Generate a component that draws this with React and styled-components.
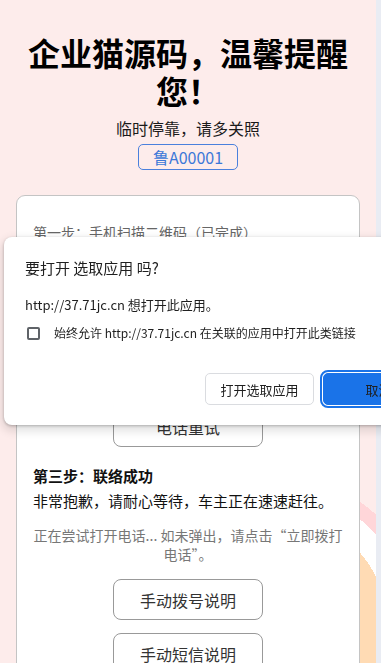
import React from "react";
import styled, { createGlobalStyle } from "styled-components";

const GlobalStyle = createGlobalStyle`
  html, body {
    margin: 0;
    padding: 0;
    overflow: hidden;
    font-family: "Noto Sans CJK SC", "Noto Sans", sans-serif;
  }
`;

const Screen = styled.div`
  display: flex;
  height: 100vh;
  width: 100vw;
`;

const Main = styled.div`
  flex: 1;
  display: flex;
  flex-direction: column;
  align-items: center;
  padding: 33px 16px 0;
  background: radial-gradient(
      circle at 269px 631px,
      #ffdbb4 0 120px,
      #ffffff 120px 144px,
      #ffd6d9 144px 158px,
      transparent 158px
    ),
    #fdeceb;
`;

const ScrollTrack = styled.div`
  width: 5px;
  background-color: #e9ecf3;
`;

const Title = styled.h1`
  margin: 0;
  font-size: 32px;
  line-height: 38px;
  font-weight: 700;
  color: #000;
  text-align: center;
`;

const Subtitle = styled.p`
  margin: 8px 0 0;
  font-size: 16px;
  line-height: 22px;
  color: #1a1a1a;
`;

const Plate = styled.div`
  margin-top: 5px;
  width: 100px;
  height: 27px;
  box-sizing: border-box;
  border: 1px solid #4a80dd;
  border-radius: 5px;
  display: flex;
  justify-content: center;
  align-items: center;
  font-size: 16px;
  color: #3c78d8;
`;

const Card = styled.div`
  margin-top: 25px;
  width: 100%;
  box-sizing: border-box;
  background: #fff;
  border: 1px solid #c4c4c4;
  border-radius: 9px;
  padding: 27px 16px 40px;
  display: flex;
  flex-direction: column;
`;

const StepDone = styled.p`
  margin: 0;
  font-size: 14px;
  line-height: 18px;
  color: #666;
`;

const StepTitle = styled.p`
  margin: ${(p) => p.$mt || 0}px 0 0;
  font-size: 15px;
  line-height: 20px;
  font-weight: 700;
  color: #111;
`;

const StepText = styled.p`
  margin: 4px 0 0;
  font-size: 15px;
  line-height: 22px;
  color: #111;
`;

const Note = styled.p`
  margin: ${(p) => p.$mt || 0}px 0 0;
  font-size: 14px;
  line-height: 19px;
  color: #777;
  text-align: center;
`;

const OutlineButton = styled.button`
  margin: ${(p) => p.$mt || 0}px auto 0;
  width: 150px;
  height: 41px;
  flex-shrink: 0;
  background: #fff;
  border: 1px solid #999;
  border-radius: 8px;
  font-family: inherit;
  font-size: 16px;
  color: #333;
`;

const Dialog = styled.div`
  position: fixed;
  left: 4px;
  top: 237px;
  width: 451px;
  box-sizing: border-box;
  padding: 21px 21px 20px;
  background: #fff;
  border-radius: 8px;
  box-shadow: 0 1px 3px rgba(0, 0, 0, 0.25), 0 4px 10px 2px rgba(0, 0, 0, 0.12);
  color: #1f1f1f;
`;

const DialogTitle = styled.div`
  font-size: 15px;
  line-height: 20px;
`;

const DialogText = styled.div`
  margin-top: 18px;
  font-size: 13px;
  line-height: 18px;
`;

const CheckRow = styled.label`
  margin-top: 10px;
  display: flex;
  align-items: center;
  gap: 14px;
  padding-left: 2px;
  font-size: 12px;
  line-height: 18px;
  white-space: nowrap;
`;

const CheckBox = styled.span`
  width: 13px;
  height: 13px;
  box-sizing: border-box;
  border: 2px solid #5f6368;
  border-radius: 2px;
`;

const DialogActions = styled.div`
  margin-top: 31px;
  padding-left: 180px;
  display: flex;
  gap: 9px;
`;

const DialogButton = styled.button`
  height: 32px;
  width: ${(p) => (p.$primary ? "112px" : "110px")};
  box-sizing: border-box;
  border-radius: 5px;
  font-family: inherit;
  font-size: 13px;
  border: 1px solid ${(p) => (p.$primary ? "#1a73e8" : "#dadce0")};
  background: ${(p) => (p.$primary ? "#1a73e8" : "#fff")};
  color: ${(p) => (p.$primary ? "#1f1f1f" : "#1f1f1f")};
  outline: ${(p) => (p.$primary ? "2px solid #1a73e8" : "none")};
  outline-offset: 1px;
`;

export default function App() {
  return (
    <>
      <GlobalStyle />
      <Screen>
        <Main>
          <Title>企业猫源码，温馨提醒您！</Title>
          <Subtitle>临时停靠，请多关照</Subtitle>
          <Plate>鲁A00001</Plate>
          <Card>
            <StepDone>第一步：手机扫描二维码（已完成）</StepDone>
            <StepTitle $mt={18}>第二步：联系车主</StepTitle>
            <StepText>请点击下方按钮拨打车主电话</StepText>
            <OutlineButton $mt={16}>立即拨打电话</OutlineButton>
            <Note $mt={10}>（已挪车请忽略）</Note>
            <OutlineButton $mt={15}>电话重试</OutlineButton>
            <StepTitle $mt={19}>第三步：联络成功</StepTitle>
            <StepText>非常抱歉，请耐心等待，车主正在速速赶往。</StepText>
            <Note $mt={14}>
              正在尝试打开电话... 如未弹出，请点击“立即拨打电话”。
            </Note>
            <OutlineButton $mt={15}>手动拨号说明</OutlineButton>
            <OutlineButton $mt={13}>手动短信说明</OutlineButton>
          </Card>
        </Main>
        <ScrollTrack />
      </Screen>
      <Dialog>
        <DialogTitle>要打开 选取应用 吗?</DialogTitle>
        <DialogText>http://37.71jc.cn 想打开此应用。</DialogText>
        <CheckRow>
          <CheckBox />
          始终允许 http://37.71jc.cn 在关联的应用中打开此类链接
        </CheckRow>
        <DialogActions>
          <DialogButton>打开选取应用</DialogButton>
          <DialogButton $primary>取消</DialogButton>
        </DialogActions>
      </Dialog>
    </>
  );
}
